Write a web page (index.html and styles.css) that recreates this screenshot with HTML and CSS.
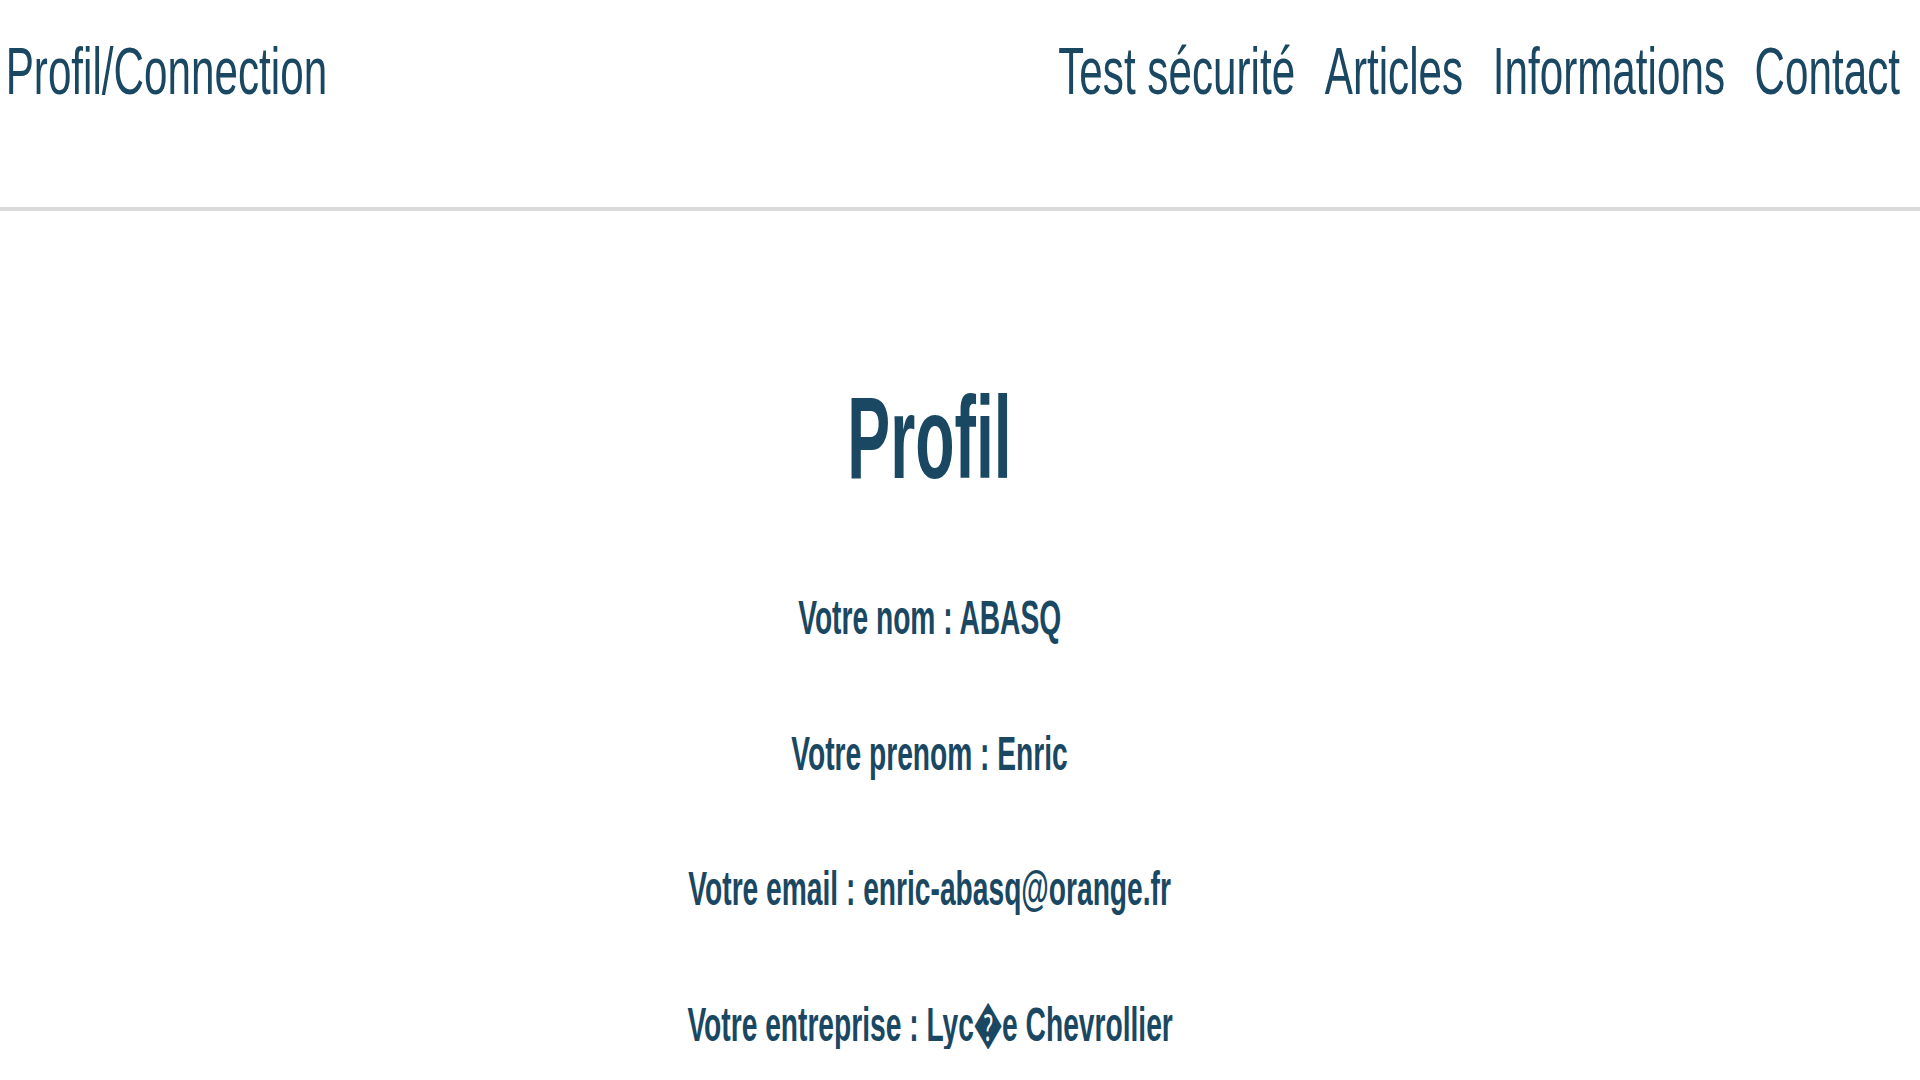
FILE: index.html
```html
<!DOCTYPE html>
<html lang="fr">
<head>
<meta charset="utf-8">
<title>Profil</title>
<link rel="stylesheet" href="styles.css">
</head>
<body>
<header class="site-header">
  <div class="bar">
    <a class="brand" href="#">Profil/Connection</a>
    <nav class="nav">
      <a href="#">Test sécurité</a>
      <a href="#">Articles</a>
      <a href="#">Informations</a>
      <a href="#">Contact</a>
    </nav>
  </div>
</header>
<main class="profile">
  <h1 class="title"><span class="squeeze-h">Profil</span></h1>
  <p class="field"><span class="squeeze">Votre nom : ABASQ</span></p>
  <p class="field"><span class="squeeze">Votre prenom : Enric</span></p>
  <p class="field"><span class="squeeze">Votre email : enric-abasq@orange.fr</span></p>
  <p class="field"><span class="squeeze">Votre entreprise : Lyc&#xFFFD;e Chevrollier</span></p>
</main>
</body>
</html>
```

FILE: styles.css
```css
html, body {
  margin: 0;
  padding: 0;
  background: #ffffff;
  overflow-x: hidden;
}

body {
  font-family: "Liberation Sans", Arial, sans-serif;
  color: #1a4862;
}

.site-header {
  width: 1920px;
  height: 207px;
  border-bottom: 4px solid #dadada;
  overflow: hidden;
}

.bar {
  width: 3048px;
  box-sizing: border-box;
  padding: 37px 32px 0 9px;
  display: flex;
  justify-content: space-between;
  align-items: flex-start;
  transform: scaleX(0.63);
  transform-origin: 0 0;
  font-size: 67px;
  line-height: 1;
}

.brand,
.nav a {
  color: #1a4862;
  text-decoration: none;
}

.nav {
  display: flex;
  gap: 47px;
}

.profile {
  width: 1860px;
  text-align: center;
}

.title {
  margin: 168px 0 0;
  font-size: 117px;
  line-height: 1;
  font-weight: 700;
}

.squeeze-h {
  display: inline-block;
  transform: scaleX(0.55);
  transform-origin: 50% 50%;
}

.field {
  margin: 0;
  height: 49px;
  font-size: 49px;
  line-height: 1;
  font-weight: 700;
  white-space: nowrap;
}

.title + .field {
  margin-top: 97px;
}

.field + .field {
  margin-top: 86.5px;
}

.squeeze {
  display: inline-block;
  transform: scaleX(0.575);
  transform-origin: 50% 50%;
}
```
